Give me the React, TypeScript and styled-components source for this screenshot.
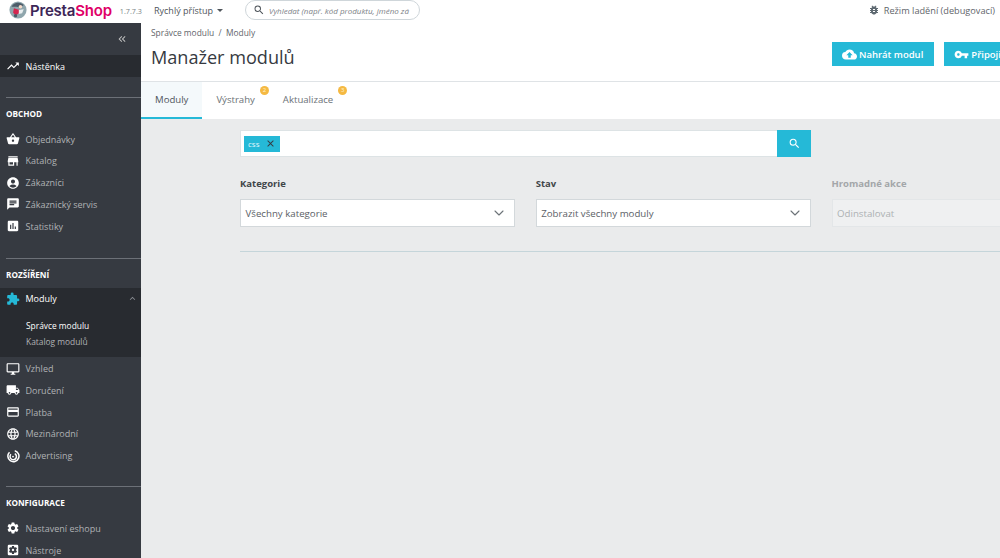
import React from 'react';
import styled, { createGlobalStyle } from 'styled-components';
import { IconType } from 'react-icons';
import { ChevronDown } from 'lucide-react';
import {
  MdAccountCircle,
  MdAssessment,
  MdBugReport,
  MdChat,
  MdClose,
  MdCloudUpload,
  MdCreditCard,
  MdExpandLess,
  MdExtension,
  MdKeyboardDoubleArrowLeft,
  MdLanguage,
  MdLocalShipping,
  MdOutlineDesktopWindows,
  MdSearch,
  MdSettings,
  MdSettingsApplications,
  MdShoppingBasket,
  MdStore,
  MdTrendingUp,
  MdVpnKey,
} from 'react-icons/md';

const GlobalStyle = createGlobalStyle`
  html, body {
    margin: 0;
    height: 100%;
    overflow: hidden;
    background: #eaebec;
    font-family: "Open Sans", "Liberation Sans", sans-serif;
  }
  * { box-sizing: border-box; }
`;

const Page = styled.div`
  width: 1000px;
  height: 558px;
  display: flex;
  flex-direction: column;
  overflow: hidden;
`;

const Header = styled.header`
  height: 23px;
  flex: none;
  display: flex;
  align-items: center;
  background: #fff;
  padding: 0 5px 3px 9px;
`;

const Logo = styled.div`
  display: flex;
  align-items: center;
  width: 145px;
  flex: none;
`;

const LogoName = styled.span`
  font-family: Inter, "Open Sans", sans-serif;
  font-size: 15px;
  font-weight: 600;
  letter-spacing: -0.2px;
  color: #3d2657;
  margin-left: 3px;

  b {
    color: #df0067;
    font-weight: 600;
  }
`;

const Version = styled.span`
  font-size: 7.2px;
  color: #7a7f85;
  margin-left: 8px;
  padding-top: 2px;
  white-space: nowrap;
`;

const QuickAccess = styled.div`
  display: flex;
  align-items: center;
  gap: 4px;
  font-size: 9px;
  color: #4f555b;
  width: 91px;
  flex: none;

  &::after {
    content: '';
    border-left: 3px solid transparent;
    border-right: 3px solid transparent;
    border-top: 3px solid #4f555b;
  }
`;

const HeaderSearch = styled.div`
  width: 175px;
  height: 20px;
  flex: none;
  display: flex;
  align-items: center;
  gap: 4px;
  padding-left: 7px;
  border: 1px solid #cfd6da;
  border-radius: 10px;
  overflow: hidden;
  font-size: 8px;
  font-style: italic;
  color: #7d8287;
  white-space: nowrap;

  svg {
    flex: none;
    font-size: 12px;
    color: #4f555b;
  }
`;

const DebugMode = styled.div`
  margin-left: auto;
  display: flex;
  align-items: center;
  gap: 4px;
  font-size: 9.2px;
  color: #5f656b;

  svg {
    font-size: 12px;
    color: #5f6a72;
  }
`;

const Body = styled.div`
  flex: 1;
  display: flex;
  min-height: 0;
`;

const Sidebar = styled.nav`
  width: 141px;
  flex: none;
  background: #363a41;
  overflow: hidden;
`;

const CollapseRow = styled.div`
  height: 32px;
  display: flex;
  align-items: center;
  justify-content: flex-end;
  padding-right: 13px;
  color: #bebebe;
  font-size: 12px;
`;

const MenuRow = styled.div<{ $active?: boolean }>`
  height: 21.75px;
  display: flex;
  align-items: center;
  padding: 1px 0 0 5.5px;
  gap: 6px;
  font-size: 9px;
  white-space: nowrap;
  color: ${(props) => (props.$active ? '#fff' : '#b0b2b5')};
  background: ${(props) => (props.$active ? '#282b30' : 'transparent')};

  svg {
    flex: none;
    width: 14px;
    height: 14px;
    color: #fff;
  }
`;

const ModuleIcon = styled.span`
  display: flex;
  svg {
    color: #25b9d7;
  }
`;

const RowChevron = styled.span`
  margin-left: auto;
  padding-right: 3px;
  display: flex;
  svg {
    width: 11px;
    height: 11px;
    color: #8a8e93;
  }
`;

const Section = styled.div<{ $gap: number; $after?: number }>`
  border-top: 1px solid #6c7077;
  margin: ${(props) => props.$gap}px 0 ${(props) => props.$after ?? 0}px 6px;
  padding: 10px 0 0;
  height: 31px;
  font-size: 8.2px;
  line-height: 11px;
  font-weight: 700;
  color: #fff;
  text-transform: uppercase;
`;

const SubMenu = styled.div`
  background: #282b30;
  height: 48px;
  padding: 9px 0 0 26px;
`;

const SubItem = styled.div<{ $active?: boolean }>`
  height: 16px;
  font-size: 8.4px;
  line-height: 16px;
  color: ${(props) => (props.$active ? '#fff' : '#b0b2b5')};
`;

const Main = styled.main`
  flex: 1;
  min-width: 0;
  display: flex;
  flex-direction: column;
`;

const PageHead = styled.div`
  height: 59px;
  flex: none;
  background: #fff;
  border-bottom: 1px solid #dfe3e6;
  padding: 4px 0 0 10px;
  position: relative;
`;

const Breadcrumb = styled.div`
  font-size: 8.4px;
  line-height: 12px;
  color: #5f656b;
`;

const Title = styled.h1`
  margin: 5px 0 0;
  font-size: 18.1px;
  line-height: 26px;
  font-weight: 400;
  color: #363a41;
`;

const HeadActions = styled.div`
  position: absolute;
  top: 19px;
  left: 691px;
  display: flex;
  gap: 10px;
`;

const ActionButton = styled.button`
  height: 24px;
  flex: none;
  display: flex;
  align-items: center;
  gap: 2px;
  padding: 0 11px 0 10px;
  border: 0;
  background: #25b9d7;
  color: #fff;
  font-family: inherit;
  font-size: 9.5px;
  font-weight: 600;
  white-space: nowrap;

  svg {
    font-size: 15px;
  }
`;

const Tabs = styled.div`
  height: 37px;
  flex: none;
  display: flex;
  background: #fff;
`;

const Tab = styled.div<{ $active?: boolean }>`
  position: relative;
  height: 37px;
  display: flex;
  align-items: center;
  padding: 0 14px;
  font-size: 9.6px;
  color: ${(props) => (props.$active ? '#4f555b' : '#6c7277')};
  background: ${(props) => (props.$active ? '#f4f9fb' : 'transparent')};
  border-bottom: 2px solid ${(props) => (props.$active ? '#25b9d7' : 'transparent')};
`;

const Badge = styled.span`
  position: absolute;
  top: 4px;
  right: 0;
  width: 9px;
  height: 9px;
  border-radius: 50%;
  background: #f5b942;
  color: #fff3d0;
  font-size: 6px;
  line-height: 9px;
  text-align: center;
`;

const Content = styled.div`
  flex: 1;
  background: #eaebec;
  padding: 11px 0 0 99px;
  width: 1140px;
`;

const SearchBar = styled.div`
  width: 571px;
  height: 27px;
  display: flex;
  background: #fff;
  border: 1px solid #dde3e5;
  border-right: 0;
`;

const Tags = styled.div`
  flex: 1;
  display: flex;
  align-items: center;
  padding-left: 3px;
`;

const Tag = styled.span`
  height: 16px;
  display: flex;
  align-items: center;
  gap: 6px;
  padding: 0 4px;
  background: #25b9d7;
  color: #e0f6fb;
  font-size: 8px;

  svg {
    font-size: 11px;
    color: #363a41;
  }
`;

const SearchButton = styled.div`
  width: 34px;
  height: 27px;
  margin: -1px 0;
  display: flex;
  align-items: center;
  justify-content: center;
  background: #25b9d7;
  color: #fff;
  font-size: 13px;
`;

const Filters = styled.div`
  display: grid;
  grid-template-columns: repeat(3, 275.25px);
  column-gap: 20.5px;
  margin-top: 20px;
`;

const Label = styled.div<{ $disabled?: boolean }>`
  font-size: 9.5px;
  line-height: 14px;
  font-weight: 700;
  margin-bottom: 8px;
  color: ${(props) => (props.$disabled ? '#a3a6a9' : '#414549')};
`;

const Select = styled.div<{ $disabled?: boolean }>`
  height: 28px;
  display: flex;
  align-items: center;
  justify-content: space-between;
  padding: 0 7px 0 4.5px;
  font-size: 9.7px;
  color: ${(props) => (props.$disabled ? '#adb0b3' : '#5b6066')};
  background: ${(props) => (props.$disabled ? '#eff0f1' : '#fff')};
  border: 1px solid ${(props) => (props.$disabled ? '#e3e6e8' : '#d3d8db')};

  svg {
    color: #6c7277;
  }
`;

const Rule = styled.hr`
  margin: 24px 0 0;
  border: 0;
  border-top: 1px solid #c5d5da;
`;

// Simplified puffin mark of the shop logo
const LogoMark = () => (
  <svg width="18" height="18" viewBox="0 0 22 22">
    <circle cx="11" cy="11" r="10.5" fill="#8fa6ad" />
    <path d="M3 7a9.5 9.5 0 0 1 15-2l-4 3-5-1z" fill="#4c5b68" />
    <circle cx="14" cy="7" r="2.2" fill="#f3d9c8" />
    <path d="M6 9l7 2-1 4-4 3-3-4z" fill="#d3264f" />
    <path d="M12 11l6-1-2 5-4 1z" fill="#e9eef0" />
    <circle cx="8" cy="18" r="2" fill="#4c5b68" />
  </svg>
);

const AdvertisingIcon = () => (
  <svg viewBox="0 0 24 24" fill="none" stroke="#fff" strokeWidth="2.6">
    <path d="M6 5.5a9.5 9.5 0 1 0 9-2.5" />
    <path d="M8.5 9a5.5 5.5 0 1 0 6.5-1" />
    <circle cx="12" cy="13" r="1.6" fill="#fff" stroke="none" />
  </svg>
);

type MenuItem = { label: string; Icon: IconType | typeof AdvertisingIcon };

const shopItems: MenuItem[] = [
  { label: 'Objednávky', Icon: MdShoppingBasket },
  { label: 'Katalog', Icon: MdStore },
  { label: 'Zákazníci', Icon: MdAccountCircle },
  { label: 'Zákaznický servis', Icon: MdChat },
  { label: 'Statistiky', Icon: MdAssessment },
];

const extensionItems: MenuItem[] = [
  { label: 'Vzhled', Icon: MdOutlineDesktopWindows },
  { label: 'Doručení', Icon: MdLocalShipping },
  { label: 'Platba', Icon: MdCreditCard },
  { label: 'Mezinárodní', Icon: MdLanguage },
  { label: 'Advertising', Icon: AdvertisingIcon },
];

const configItems: MenuItem[] = [
  { label: 'Nastavení eshopu', Icon: MdSettings },
  { label: 'Nástroje', Icon: MdSettingsApplications },
];

const renderItems = (items: MenuItem[]) =>
  items.map(({ label, Icon }) => (
    <MenuRow key={label}>
      <Icon />
      {label}
    </MenuRow>
  ));

const App = () => {
  return (
    <Page>
      <GlobalStyle />
      <Header>
        <Logo>
          <LogoMark />
          <LogoName>
            Presta<b>Shop</b>
          </LogoName>
          <Version>1.7.7.3</Version>
        </Logo>
        <QuickAccess>Rychlý přístup</QuickAccess>
        <HeaderSearch>
          <MdSearch />
          Vyhledat (např. kód produktu, jméno zá
        </HeaderSearch>
        <DebugMode>
          <MdBugReport />
          Režim ladění (debugovací)
        </DebugMode>
      </Header>
      <Body>
        <Sidebar>
          <CollapseRow>
            <MdKeyboardDoubleArrowLeft />
          </CollapseRow>
          <MenuRow $active>
            <MdTrendingUp />
            Nástěnka
          </MenuRow>
          <Section $gap={20}>Obchod</Section>
          {renderItems(shopItems)}
          <Section $gap={21} $after={-1}>
            Rozšíření
          </Section>
          <MenuRow $active>
            <ModuleIcon>
              <MdExtension />
            </ModuleIcon>
            Moduly
            <RowChevron>
              <MdExpandLess />
            </RowChevron>
          </MenuRow>
          <SubMenu>
            <SubItem $active>Správce modulu</SubItem>
            <SubItem>Katalog modulů</SubItem>
          </SubMenu>
          {renderItems(extensionItems)}
          <Section $gap={20}>Konfigurace</Section>
          {renderItems(configItems)}
        </Sidebar>
        <Main>
          <PageHead>
            <Breadcrumb>Správce modulu&nbsp; /&nbsp; Moduly</Breadcrumb>
            <Title>Manažer modulů</Title>
            <HeadActions>
              <ActionButton>
                <MdCloudUpload />
                Nahrát modul
              </ActionButton>
              <ActionButton>
                <MdVpnKey />
                Připojit se k tržišti
              </ActionButton>
            </HeadActions>
          </PageHead>
          <Tabs>
            <Tab $active>Moduly</Tab>
            <Tab>
              Výstrahy
              <Badge>2</Badge>
            </Tab>
            <Tab>
              Aktualizace
              <Badge>3</Badge>
            </Tab>
          </Tabs>
          <Content>
            <SearchBar>
              <Tags>
                <Tag>
                  css
                  <MdClose />
                </Tag>
              </Tags>
              <SearchButton>
                <MdSearch />
              </SearchButton>
            </SearchBar>
            <Filters>
              <div>
                <Label>Kategorie</Label>
                <Select>
                  Všechny kategorie
                  <ChevronDown size={16} strokeWidth={1.6} />
                </Select>
              </div>
              <div>
                <Label>Stav</Label>
                <Select>
                  Zobrazit všechny moduly
                  <ChevronDown size={16} strokeWidth={1.6} />
                </Select>
              </div>
              <div>
                <Label $disabled>Hromadné akce</Label>
                <Select $disabled>Odinstalovat</Select>
              </div>
            </Filters>
            <Rule />
          </Content>
        </Main>
      </Body>
    </Page>
  );
};

export default App;
